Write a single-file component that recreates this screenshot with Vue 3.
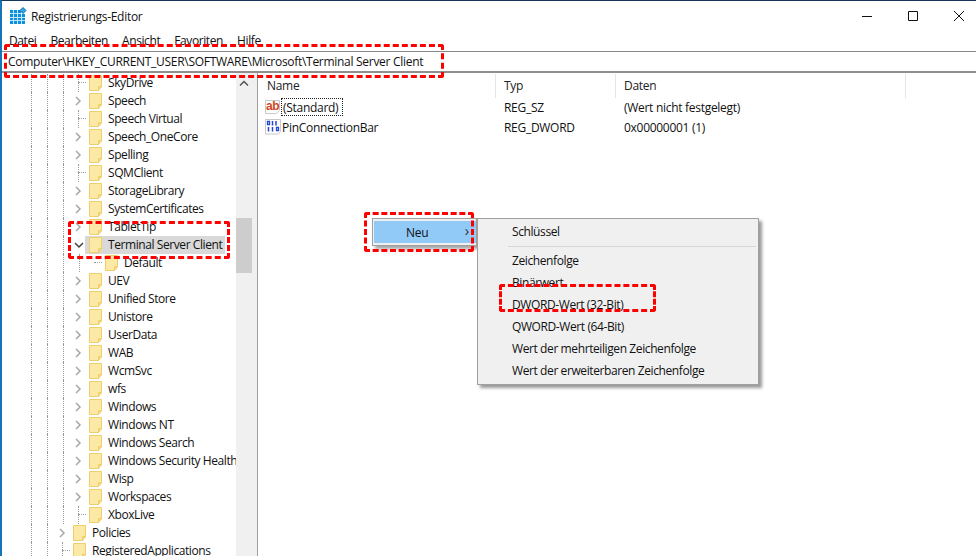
<script setup>
const menu = ['Datei', 'Bearbeiten', 'Ansicht', 'Favoriten', 'Hilfe']
const tree = [
  ['SkyDrive', 3, 'line'], ['Speech', 3, 'c'], ['Speech Virtual', 3, 'line'], ['Speech_OneCore', 3, 'c'],
  ['Spelling', 3, 'c'], ['SQMClient', 3, 'line'], ['StorageLibrary', 3, 'c'], ['SystemCertificates', 3, 'c'],
  ['TabletTip', 3, 'c'], ['Terminal Server Client', 3, 'o'], ['Default', 4, 'leaf'], ['UEV', 3, 'c'],
  ['Unified Store', 3, 'c'], ['Unistore', 3, 'c'], ['UserData', 3, 'c'], ['WAB', 3, 'c'], ['WcmSvc', 3, 'c'],
  ['wfs', 3, 'c'], ['Windows', 3, 'c'], ['Windows NT', 3, 'c'], ['Windows Search', 3, 'c'],
  ['Windows Security Health', 3, 'c'], ['Wisp', 3, 'c'], ['Workspaces', 3, 'c'], ['XboxLive', 3, 'line'],
  ['Policies', 2, 'c'], ['RegisteredApplications', 2, 'line']
]
</script>

<template>
  <div class="win">
    <header class="title">
      <svg class="appicon" width="17" height="17" viewBox="0 0 17 17">
        <path fill="#0f8fdc" d="M0 3h11v14H0z" />
        <path fill="#0f8fdc" d="M11 7h4v10h-4z" />
        <path stroke="#bfe6fa" stroke-width="1" fill="none" d="M3.500 3v14M7.500 3v14M11.500 7v10M0 6.500h11M0 10.500h15M0 13.500h15" />
        <path fill="#2fa8e8" stroke="#0c6fb0" d="M13 .5l3 3-3 3-3-3z" />
      </svg>
      <span class="title-text">Registrierungs-Editor</span>
      <div class="controls">
        <svg width="12" height="12" viewBox="0 0 12 12"><path d="M1 6.500h10" stroke="#111" fill="none" /></svg>
        <svg width="12" height="12" viewBox="0 0 12 12"><path d="M1.500 1.500h9v9h-9z" stroke="#111" fill="none" /></svg>
        <svg width="12" height="12" viewBox="0 0 12 12"><path d="M1 1l10 10M11 1L1 11" stroke="#111" fill="none" /></svg>
      </div>
    </header>
    <nav class="menu"><span v-for="m in menu" :key="m">{{ m }}</span></nav>
    <div class="address">Computer\HKEY_CURRENT_USER\SOFTWARE\Microsoft\Terminal Server Client</div>
    <main class="body">
      <aside class="tree">
        <div class="rows">
          <div v-for="r in tree" :key="r[0]" class="row">
            <span v-for="i in r[1]" :key="i" class="guide"></span>
            <span class="exp">
              <svg v-if="r[2] === 'c'" width="9" height="10" viewBox="0 0 9 10"><path d="M2 1l4 4-4 4" fill="none" stroke="#a6a6a6" stroke-width="1.500" /></svg>
              <svg v-else-if="r[2] === 'o'" width="10" height="9" viewBox="0 0 10 9"><path d="M1 2l4 4 4-4" fill="none" stroke="#404040" stroke-width="1.500" /></svg>
              <span v-else class="tick" :class="{ stem: r[2] === 'line' }"></span>
            </span>
            <span class="node" :class="{ sel: r[2] === 'o' }">
              <svg class="folder" width="14" height="16" viewBox="0 0 14 16">
                <path d="M.5.5h12v11.500l-3 3.500H.5z" fill="#fde9a6" stroke="#f0cf6a" />
                <path d="M9.500 15.500v-4h3" fill="#f6d77c" stroke="#f0cf6a" />
              </svg>
              <span class="label">{{ r[0] }}</span>
            </span>
          </div>
        </div>
        <div class="scroll">
          <svg class="up" width="10" height="7" viewBox="0 0 10 7"><path d="M1 5.500l4-4 4 4" fill="none" stroke="#505050" stroke-width="1.500" /></svg>
          <div class="thumb"></div>
        </div>
      </aside>
      <div class="split"></div>
      <section class="list">
        <div class="head">
          <span class="c1">Name</span><span class="c2">Typ</span><span class="c3">Daten</span><span class="c4"></span>
        </div>
        <div class="item">
          <span class="c1">
            <svg class="ic" width="15" height="16" viewBox="0 0 15 16">
              <path d="M.5 1.500h14v10l-3 3H.5z" fill="#fff" stroke="#c8c8c8" />
              <text x="1" y="10.500" class="ab">ab</text>
            </svg>
            <span class="focus">(Standard)</span>
          </span>
          <span class="c2">REG_SZ</span><span class="c3">(Wert nicht festgelegt)</span>
        </div>
        <div class="item">
          <span class="c1">
            <svg class="ic" width="16" height="16" viewBox="0 0 16 16">
              <path d="M.5 .5h15v12l-2 2.500H.5z" fill="#fff" stroke="#c8c8c8" />
              <path d="M2.500 2.500h2v3h-2zM11.500 8.500h2v3h-2z" fill="none" stroke="#2248d0" stroke-width="1.300" />
              <path d="M7.500 2v4.500M11 2v4.500M3.500 8v4.500M7.500 8v4.500" fill="none" stroke="#2248d0" stroke-width="1.500" />
            </svg>
            <span class="plain">PinConnectionBar</span>
          </span>
          <span class="c2">REG_DWORD</span><span class="c3">0x00000001 (1)</span>
        </div>
      </section>
    </main>

    <div class="ctx">
      <div class="neu"><span>Neu</span><i>›</i></div>
    </div>
    <div class="sub">
      <div class="s-item">Schlüssel</div>
      <div class="s-sep"></div>
      <div class="s-item">Zeichenfolge</div>
      <div class="s-item">Binärwert</div>
      <div class="s-item">DWORD-Wert (32-Bit)</div>
      <div class="s-item">QWORD-Wert (64-Bit)</div>
      <div class="s-item">Wert der mehrteiligen Zeichenfolge</div>
      <div class="s-item">Wert der erweiterbaren Zeichenfolge</div>
    </div>

    <div class="mark m-addr"></div>
    <div class="mark m-tree"></div>
    <div class="mark m-neu"></div>
    <div class="mark m-dword"></div>
  </div>
</template>

<style>
html, body { margin: 0; background: #fff; }
</style>

<style scoped>
.win {
  position: relative;
  width: 976px;
  height: 556px;
  overflow: hidden;
  box-sizing: border-box;
  background: #fff;
  border-top: 1px solid #16365c;
  border-left: 2px solid #1674b8;
  font-family: "Open Sans", "Noto Sans", sans-serif;
  font-size: 12px;
  letter-spacing: -.29px;
  color: #111;
  display: flex;
  flex-direction: column;
}
.title { height: 29px; display: flex; align-items: center; flex: none; padding-left: 8px; }
.appicon { flex: none; }
.title-text { margin-left: 4px; margin-top: 1px; }
.controls { margin-left: auto; display: flex; gap: 34px; padding-right: 11px; }
.menu { height: 21px; flex: none; display: flex; gap: 14px; padding-left: 7px; align-items: center; letter-spacing: -.4px; }
.address {
  height: 19px; flex: none; line-height: 19px; margin-left: -2px; padding-left: 8px;
  border-top: 1px solid #8a8a8a; border-bottom: 2px solid #8f8f8f; background: #fff;
}
.body { flex: 1; display: flex; min-height: 0; }
.tree { width: 250px; flex: none; display: flex; overflow: hidden; }
.rows { width: 234px; flex: none; padding-top: 1px; overflow: hidden; letter-spacing: -.42px; }
.row { height: 18px; display: flex; align-items: center; white-space: nowrap; margin-left: 29px; }
.guide { width: 16px; height: 18px; flex: none; box-sizing: border-box; border-left: 1px dotted #9a9a9a; }
.exp { width: 11px; height: 18px; flex: none; display: flex; align-items: center; justify-content: center; margin-left: -6px; margin-right: 1px; position: relative; }
.tick { position: absolute; left: 5px; top: 8px; width: 8px; border-top: 1px dotted #9a9a9a; }
.tick.stem::before { content: ""; position: absolute; left: 0; top: -9px; height: 18px; border-left: 1px dotted #9a9a9a; }
.node { display: flex; align-items: center; height: 18px; padding: 0 3px 0 4px; }
.node.sel { background: #d9d9d9; }
.folder { flex: none; }
.label { margin-left: 5px; line-height: 18px; }
.scroll { width: 16px; flex: none; background: #f0f0f0; position: relative; }
.up { position: absolute; left: 3px; top: 7px; }
.thumb { position: absolute; left: 0; top: 145px; width: 16px; height: 55px; background: #cdcdcd; }
.split { width: 6px; flex: none; background: #f0f0f0; border-right: 1px solid #a0a0a0; box-sizing: border-box; }
.list { flex: 1; min-width: 0; margin-top: 1px; }
.head { height: 23px; display: flex; align-items: flex-start; color: #222; }
.head span { height: 24px; line-height: 24px; box-sizing: border-box; border-right: 1px solid #e5e5e5; }
.item { height: 20px; display: flex; align-items: center; white-space: nowrap; }
.c1 { width: 238px; padding-left: 9px; box-sizing: border-box; display: flex; align-items: center; flex: none; }
.c2 { width: 120px; padding-left: 8px; box-sizing: border-box; flex: none; }
.c3 { width: 290px; padding-left: 8px; box-sizing: border-box; flex: none; }
.c4 { flex: 1; border-right: 0 !important; }
.ic { flex: none; margin-left: -2px; }
.ab { font-family: "Liberation Sans", sans-serif; font-weight: 700; font-size: 12px; letter-spacing: -.3px; fill: #d2451e; }
.focus { margin-left: 1px; padding: 1px 5px 0 2px; height: 18px; line-height: 18px; box-sizing: border-box; outline: 1px dotted #222; outline-offset: -1px; }
.plain { margin-left: 1px; }
.ctx {
  position: absolute; left: 370px; top: 217px; width: 105px; height: 28px; box-sizing: border-box;
  background: #f0f0f0; border: 1px solid #a0a0a0; padding: 2px 0 0 1px; box-shadow: 3px 3px 3px rgba(0,0,0,.35);
}
.neu { height: 22px; background: #91c9f7; display: flex; align-items: center; position: relative; padding-left: 32px; }
.neu i { position: absolute; right: 7px; top: 0; font-style: normal; color: #333; font-size: 15px; line-height: 18px; z-index: 1; }
.sub {
  position: absolute; left: 475px; top: 217px; width: 282px; height: 167px; box-sizing: border-box;
  background: #f0f0f0; border: 1px solid #a0a0a0; box-shadow: 3px 3px 3px rgba(0,0,0,.4); padding-top: 2px; letter-spacing: -.4px;
}
.s-item { height: 22px; line-height: 22px; padding-left: 34px; white-space: nowrap; }
.s-sep { height: 1px; margin: 3px 2px 3px 30px; background: #d7d7d7; }
.mark { position: absolute; box-sizing: border-box; border: 3px dashed #f00; border-radius: 3px; }
.m-addr { left: 2px; top: 43px; width: 440px; height: 34px; }
.m-tree { left: 66px; top: 220px; width: 162px; height: 38px; }
.m-neu { left: 362px; top: 211px; width: 110px; height: 40px; }
.m-dword { left: 497px; top: 283px; width: 157px; height: 28px; }
</style>
